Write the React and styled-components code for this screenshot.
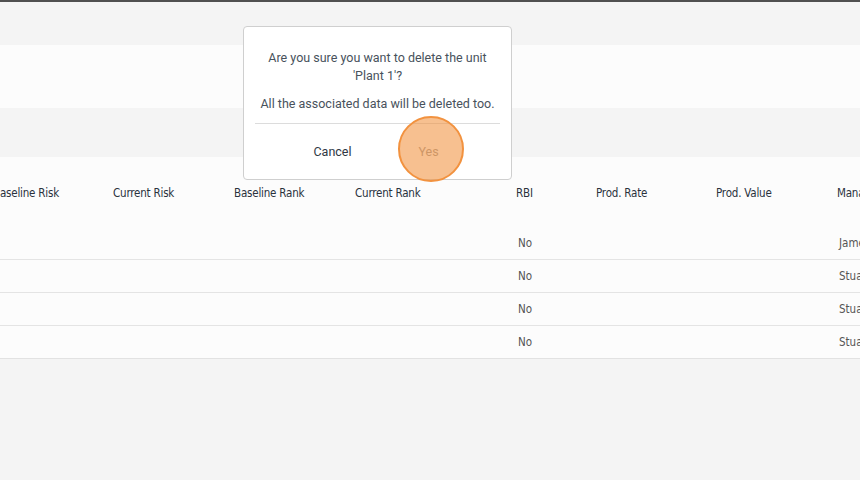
import React from 'react'
import styled, { createGlobalStyle } from 'styled-components'

const GlobalStyle = createGlobalStyle`
  html, body {
    margin: 0;
    padding: 0;
    background: #f4f4f4;
    font-family: Roboto, "Liberation Sans", sans-serif;
  }
  #root {
    width: 860px;
    height: 480px;
    overflow: hidden;
  }
`

const Page = styled.div`
  position: relative;
  width: 860px;
  height: 480px;
  overflow: hidden;
  background: #f4f4f4;
  border-top: 2px solid #505050;
  box-sizing: border-box;
`

const Band = styled.div`
  height: ${p => p.h}px;
  background: ${p => p.bg};
`

const Table = styled.div`
  background: #fcfcfc;
  border-bottom: 1px solid #e2e2e2;
`

const Row = styled.div`
  display: flex;
  align-items: center;
  height: ${p => p.h}px;
  margin-left: -7px;
  border-top: ${p => (p.line ? '1px solid #e4e4e4' : 'none')};
  box-sizing: border-box;
`

const HeadCell = styled.div`
  flex: 0 0 ${p => p.w}px;
  box-sizing: border-box;
  font-family: "DejaVu Sans Condensed", "Liberation Sans Narrow", Roboto, sans-serif;
  font-size: 11.5px;
  font-weight: 500;
  letter-spacing: -0.2px;
  color: #2a323d;
  white-space: nowrap;
  overflow: hidden;
  padding-top: 2px;
`

const Cell = styled.div`
  flex: 0 0 ${p => p.w}px;
  box-sizing: border-box;
  font-family: "DejaVu Sans Condensed", "Liberation Sans Narrow", Roboto, sans-serif;
  font-size: 11.5px;
  font-weight: 300;
  color: #555;
  white-space: nowrap;
  overflow: hidden;
  padding-left: 2px;
`

const Dialog = styled.div`
  position: absolute;
  left: 243px;
  top: 24px;
  width: 269px;
  height: 154px;
  box-sizing: border-box;
  background: #fff;
  border: 1px solid #cfcfcf;
  border-radius: 4px;
  padding: 0 11px;
  display: flex;
  flex-direction: column;
`

const Message = styled.p`
  margin: ${p => p.mt}px 0 0;
  text-align: center;
  font-size: 12.5px;
  line-height: 18px;
  color: #48525c;
`

const Divider = styled.div`
  margin-top: 10px;
  border-top: 1px solid #dcdcdc;
`

const Actions = styled.div`
  display: flex;
  justify-content: center;
  padding: 20px 0 0 6px;
`

const Action = styled.button`
  position: relative;
  border: none;
  background: none;
  font-family: Roboto, "Liberation Sans", sans-serif;
  font-size: 12.5px;
  font-weight: 400;
  width: 96px;
  padding: 0;
  color: ${p => (p.muted ? '#9a9a9a' : '#2f3844')};
`

const Highlight = styled.span`
  position: absolute;
  left: 50%;
  top: 50%;
  width: 62px;
  height: 62px;
  margin: -36px 0 0 -31px;
  border-radius: 50%;
  border: 2.5px solid #f2923f;
  background: rgba(242, 146, 63, 0.58);
  pointer-events: none;
`

const cols = [
  { label: 'Baseline Risk', w: 120 },
  { label: 'Current Risk', w: 121 },
  { label: 'Baseline Rank', w: 121 },
  { label: 'Current Rank', w: 161 },
  { label: 'RBI', w: 80 },
  { label: 'Prod. Rate', w: 120 },
  { label: 'Prod. Value', w: 121 },
  { label: 'Manager', w: 120 },
]

const rows = ['James', 'Stuart', 'Stuart', 'Stuart']

export default function App() {
  return (
    <>
      <GlobalStyle />
      <Page>
        <Band h={43} bg="#f4f4f4" />
        <Band h={63} bg="#fcfcfc" />
        <Band h={49} bg="#f4f4f4" />
        <Table>
          <Row h={69}>
            {cols.map(c => (
              <HeadCell key={c.label} w={c.w}>{c.label}</HeadCell>
            ))}
          </Row>
          {rows.map((name, i) => (
            <Row key={i} h={33} line={i > 0}>
              {cols.map(c => (
                <Cell key={c.label} w={c.w}>
                  {c.label === 'RBI' ? 'No' : c.label === 'Manager' ? name : ''}
                </Cell>
              ))}
            </Row>
          ))}
        </Table>
        <Dialog>
          <Message mt={22}>Are you sure you want to delete the unit 'Plant 1'?</Message>
          <Message mt={10}>All the associated data will be deleted too.</Message>
          <Divider />
          <Actions>
            <Action>Cancel</Action>
            <Action muted>
              Yes
              <Highlight />
            </Action>
          </Actions>
        </Dialog>
      </Page>
    </>
  )
}
